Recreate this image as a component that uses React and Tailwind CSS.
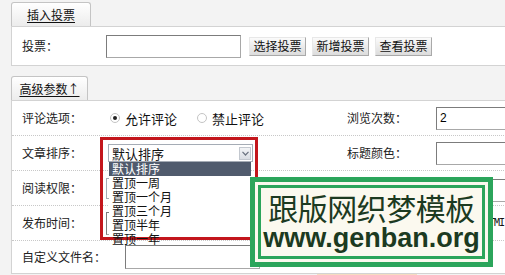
import React from "react";

const inputCls =
  "h-[23px] border border-[#a8a8a8] border-t-[#7c7c7c] border-l-[#7c7c7c] bg-white";

function Btn({ children }) {
  return (
    <div className="w-[57px] h-[19px] flex-none flex items-center justify-center text-[12px] leading-none text-[#111] bg-gradient-to-b from-[#fbfbfb] to-[#dcdcdc] border border-[#e8e8e8] border-r-[#a9a9a9] border-b-[#a9a9a9]">
      {children}
    </div>
  );
}

function Tab({ w, children }) {
  return (
    <div
      className={`${w} h-[24px] ml-[11px] flex items-center justify-center border border-b-0 border-[#c4c4c4] rounded-t-[3px] bg-gradient-to-b from-white to-[#ececec] text-[12px] leading-none text-[#111]`}
    >
      <span className="underline underline-offset-2">{children}</span>
    </div>
  );
}

function Row({ h = "h-[35px]", last = false, children }) {
  return (
    <div
      className={`${h} flex items-center ${last ? "" : "border-b border-dotted border-[#c8c8c8]"}`}
    >
      {children}
    </div>
  );
}

function Label({ children, w = "w-[94px]" }) {
  return (
    <div className={`${w} flex-none pl-[10px] text-[12px] leading-none text-[#222]`}>
      {children}
    </div>
  );
}

export default function App() {
  const items = ["默认排序", "置顶一周", "置顶一个月", "置顶三个月", "置顶半年", "置顶一年"];
  return (
    <div className="relative w-[505px] h-[275px] overflow-hidden bg-[#f3f3f3] font-['Noto_Sans_CJK_SC','Liberation_Sans',sans-serif]">
      <div className="pt-[2px]">
        <Tab w="w-[80px]">插入投票</Tab>
        <div className="ml-[11px] w-[520px] h-[40px] flex items-center border border-[#d3d3d3] bg-white">
          <Label>投票：</Label>
          <div className={`${inputCls} w-[135px] flex-none`} />
          <div className="ml-[8px] flex gap-[6px]">
            <Btn>选择投票</Btn>
            <Btn>新增投票</Btn>
            <Btn>查看投票</Btn>
          </div>
        </div>
      </div>

      <div className="mt-[10px]">
        <Tab w="w-[77px]">高级参数↑</Tab>
        <div className="ml-[11px] w-[520px] h-[174px] border border-[#d3d3d3] bg-white flex flex-col">
          <Row>
            <Label>评论选项：</Label>
            <div className="w-[241px] flex-none flex items-center text-[12px] leading-none text-[#111]">
              <span className="ml-[4px] w-[10px] h-[10px] rounded-full border border-[#c4c4c4] bg-white flex items-center justify-center">
                <span className="w-[4px] h-[4px] rounded-full bg-[#222]" />
              </span>
              <span className="ml-[5px] text-[13px]">允许评论</span>
              <span className="ml-[20px] w-[10px] h-[10px] rounded-full border border-[#c4c4c4] bg-white" />
              <span className="ml-[5px] text-[13px]">禁止评论</span>
            </div>
            <Label w="w-[89px]">
              <span className="-ml-[10px]">浏览次数：</span>
            </Label>
            <div className={`${inputCls} w-[100px] flex-none flex items-center pl-[3px] text-[12px] font-['Liberation_Sans',sans-serif]`}>
              2
            </div>
          </Row>
          <Row>
            <Label>文章排序：</Label>
            <div className="w-[241px] flex-none">
              <div className="ml-[2px] w-[145px] h-[18px] border border-[#a5acb5] bg-white flex items-center justify-between">
                <span className="pl-[3px] text-[13px] leading-none text-[#111]">默认排序</span>
                <span className="mr-[1px] w-[12px] h-[13px] border border-[#c3c8cf] bg-gradient-to-b from-[#f4f5f7] to-[#d9dde3] flex items-center justify-center">
                  <svg width="7" height="5" viewBox="0 0 7 5">
                    <path d="M0.5 0.8 L3.5 4 L6.5 0.8" fill="none" stroke="#6b7380" strokeWidth="1.2" />
                  </svg>
                </span>
              </div>
            </div>
            <Label w="w-[89px]">
              <span className="-ml-[10px]">标题颜色：</span>
            </Label>
            <div className={`${inputCls} w-[100px] flex-none`} />
          </Row>
          <Row>
            <Label>阅读权限：</Label>
            <div className="w-[150px] h-[21px] flex-none border border-[#a5acb5] bg-white" />
            <div className={`${inputCls} ml-[180px] mt-[4px] w-[100px] flex-none`} />
          </Row>
          <Row>
            <Label>发布时间：</Label>
            <div className={`${inputCls} w-[150px] flex-none`} />
            <span className="ml-[233px] text-[10px] leading-none tracking-[-1px] text-[#111] font-['DejaVu_Sans_Mono',monospace]">TMI</span>
          </Row>
          <Row h="flex-1" last>
            <Label w="w-[113px]">自定义文件名：</Label>
            <div className={`${inputCls} w-[135px] h-[24px] flex-none`} />
          </Row>
        </div>
        <div className="ml-[317px] w-[100px] h-[2px] bg-[#f6dcc1]" />
      </div>

      {/* dropdown list background */}
      <div className="absolute left-[109px] top-[162px] w-[142px] h-[75px] bg-white" />
      {/* red highlight frame */}
      <div className="absolute left-[100px] top-[137px] w-[158px] h-[103px] border-[3px] border-[#c3161c]" />
      {/* dropdown list items */}
      <div className="absolute left-[109px] top-[162px] w-[142px] flex flex-col">
        {items.map((t, i) => (
          <div
            key={t}
            className={`h-[14px] pl-[3px] flex items-center text-[12px] leading-none ${
              i === 0 ? "bg-[#505b6d] text-white" : "text-[#111]"
            }`}
          >
            {t}
          </div>
        ))}
      </div>

      {/* watermark */}
      <div className="absolute left-[250px] top-[177px] w-[243px] h-[90px] border-[5px] border-[#2ba55b] bg-[#fbf9ef] p-[3px]">
        <div className="w-full h-full border-[3px] border-[#2ba55b] bg-[#fbf9ef] flex flex-col items-center justify-center text-[#1c3a21]">
          <div className="text-[30px] leading-[32px] tracking-[-0.5px]">跟版网织梦模板</div>
          <div className="text-[27px] leading-[30px] font-bold font-['Liberation_Sans',sans-serif]">www.genban.org</div>
        </div>
      </div>
    </div>
  );
}
